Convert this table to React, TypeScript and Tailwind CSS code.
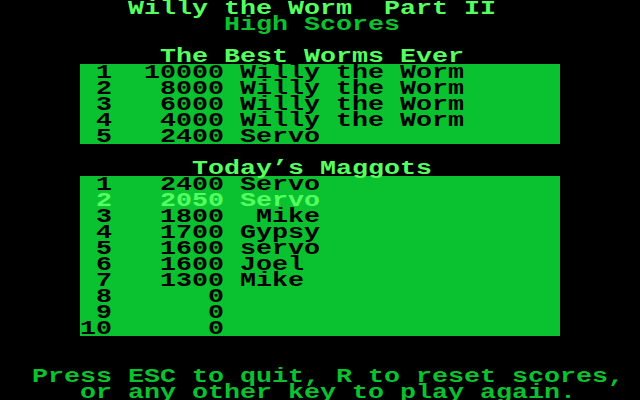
const bright = "text-[#55ff5f]";
const dim = "text-[#0ac22f]";

type Line = { text: string; color: string };

// one 40-column text row, 16px per cell
const Row = ({ text, color }: Line) => (
  <div className="h-4 overflow-visible">
    <div className={`origin-left scale-x-[1.3333] translate-y-[1px] whitespace-pre ${color}`}>{text}</div>
  </div>
);

const App = () => {
  const bestWorms: Line[] = [
    { text: " 1  10000 Willy the Worm", color: "text-black" },
    { text: " 2   8000 Willy the Worm", color: "text-black" },
    { text: " 3   6000 Willy the Worm", color: "text-black" },
    { text: " 4   4000 Willy the Worm", color: "text-black" },
    { text: " 5   2400 Servo", color: "text-black" },
  ];

  const maggots: Line[] = [
    { text: " 1   2400 Servo", color: "text-black" },
    { text: " 2   2050 Servo", color: bright },
    { text: " 3   1800  Mike", color: "text-black" },
    { text: " 4   1700 Gypsy", color: "text-black" },
    { text: " 5   1600 servo", color: "text-black" },
    { text: " 6   1600 Joel", color: "text-black" },
    { text: " 7   1300 Mike", color: "text-black" },
    { text: " 8      0", color: "text-black" },
    { text: " 9      0", color: "text-black" },
    { text: "10      0", color: "text-black" },
  ];

  return (
    <div
      className="w-[640px] h-[400px] bg-black overflow-hidden font-bold text-[20px] leading-4"
      style={{ fontFamily: '"Liberation Mono", "DejaVu Sans Mono", monospace' }}
    >
      <Row text="        Willy the Worm  Part II" color={bright} />
      <Row text="              High Scores" color={dim} />
      <Row text=" " color={dim} />
      <Row text="          The Best Worms Ever" color={bright} />

      <div className="ml-20 w-[480px] bg-[#0ac22f]">
        {bestWorms.map((l, i) => (
          <Row key={i} {...l} />
        ))}
      </div>

      <Row text=" " color={dim} />
      <Row text="            Today’s Maggots" color={bright} />

      <div className="ml-20 w-[480px] bg-[#0ac22f]">
        {maggots.map((l, i) => (
          <Row key={i} {...l} />
        ))}
      </div>

      <Row text=" " color={dim} />
      <Row text=" " color={dim} />
      <Row text="  Press ESC to quit, R to reset scores," color={dim} />
      <Row text="     or any other key to play again." color={dim} />
    </div>
  );
};

export default App;
